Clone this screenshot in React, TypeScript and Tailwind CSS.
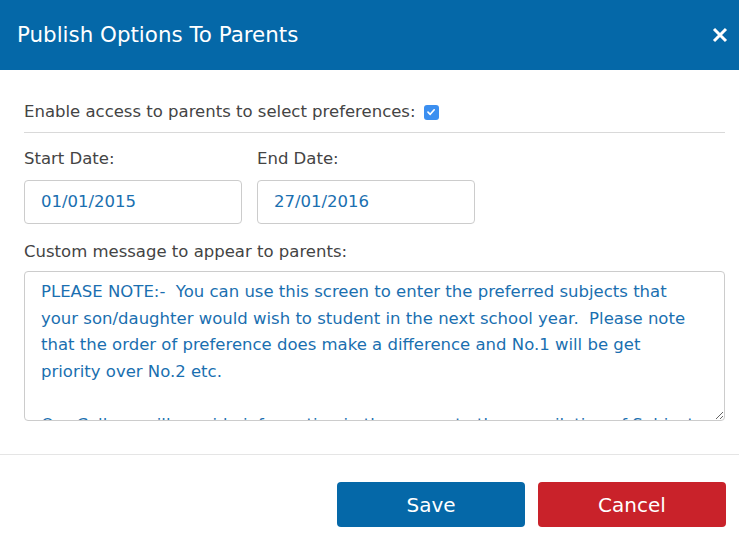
import React from "react";

const font = { fontFamily: '"DejaVu Sans", Verdana, sans-serif' };

const message =
  "PLEASE NOTE:-  You can use this screen to enter the preferred subjects that your son/daughter would wish to student in the next school year.  Please note that the order of preference does make a difference and No.1 will be get priority over No.2 etc.\n\nOur College will provide information in the run up to the compilation of Subject Options and";

export default function App() {
  return (
    <div className="w-[739px] h-[544px] bg-white overflow-hidden" style={font}>
      <div className="h-[70px] bg-[#0568a8] flex items-center justify-between pl-[17px] pr-[11px]">
        <span className="text-white text-[21.4px] pt-[1px]">Publish Options To Parents</span>
        <svg width="16" height="16" viewBox="0 0 16 16">
          <path d="M2 2 L14 14 M14 2 L2 14" stroke="white" strokeWidth="3" strokeLinecap="butt" />
        </svg>
      </div>
      <div className="pl-[24px] pr-[14px] pt-[31px] pb-[33px] border-b border-[#e5e5e5]">
        <div className="flex items-center h-[22px] text-[#444] text-[16.5px]">
          <span>Enable access to parents to select preferences:</span>
          <span className="ml-[8px] w-[15px] h-[15px] rounded-[3px] bg-[#3b8ff0] flex items-center justify-center">
            <svg width="10" height="10" viewBox="0 0 10 10">
              <path d="M2 5.2 L4.2 7.3 L8.2 2.8" stroke="white" strokeWidth="1.7" fill="none" strokeLinecap="round" strokeLinejoin="round" />
            </svg>
          </span>
        </div>
        <div className="mt-[9px] border-t border-[#d9d9d9]" />
        <div className="flex gap-[15px] mt-[15px]">
          <div className="flex flex-col">
            <span className="text-[#444] text-[16.5px] leading-[22px]">Start Date:</span>
            <div className="mt-[10px] w-[218px] h-[44px] border border-[#cccccc] rounded-[4px] flex items-center pl-[16px] text-[#1a6fb0] text-[16.5px]">
              01/01/2015
            </div>
          </div>
          <div className="flex flex-col">
            <span className="text-[#444] text-[16.5px] leading-[22px]">End Date:</span>
            <div className="mt-[10px] w-[218px] h-[44px] border border-[#cccccc] rounded-[4px] flex items-center pl-[16px] text-[#1a6fb0] text-[16.5px]">
              27/01/2016
            </div>
          </div>
        </div>
        <div className="mt-[17px] text-[#444] text-[16.5px] leading-[22px]">
          Custom message to appear to parents:
        </div>
        <textarea
          readOnly
          value={message}
          className="mt-[8px] block w-[701px] h-[150px] border border-[#cccccc] rounded-[4px] pl-[16px] pr-[22px] pt-[7px] pb-0 text-[#1a6fb0] text-[16.5px] leading-[26.5px] overflow-hidden outline-none"
          style={font}
        />
      </div>
      <div className="flex justify-end gap-[13px] pt-[27px] pr-[13px]">
        <button className="w-[188px] h-[45px] rounded-[4px] bg-[#0568a8] text-white text-[20px]">Save</button>
        <button className="w-[188px] h-[45px] rounded-[4px] bg-[#c9222a] text-white text-[20px]">Cancel</button>
      </div>
    </div>
  );
}
